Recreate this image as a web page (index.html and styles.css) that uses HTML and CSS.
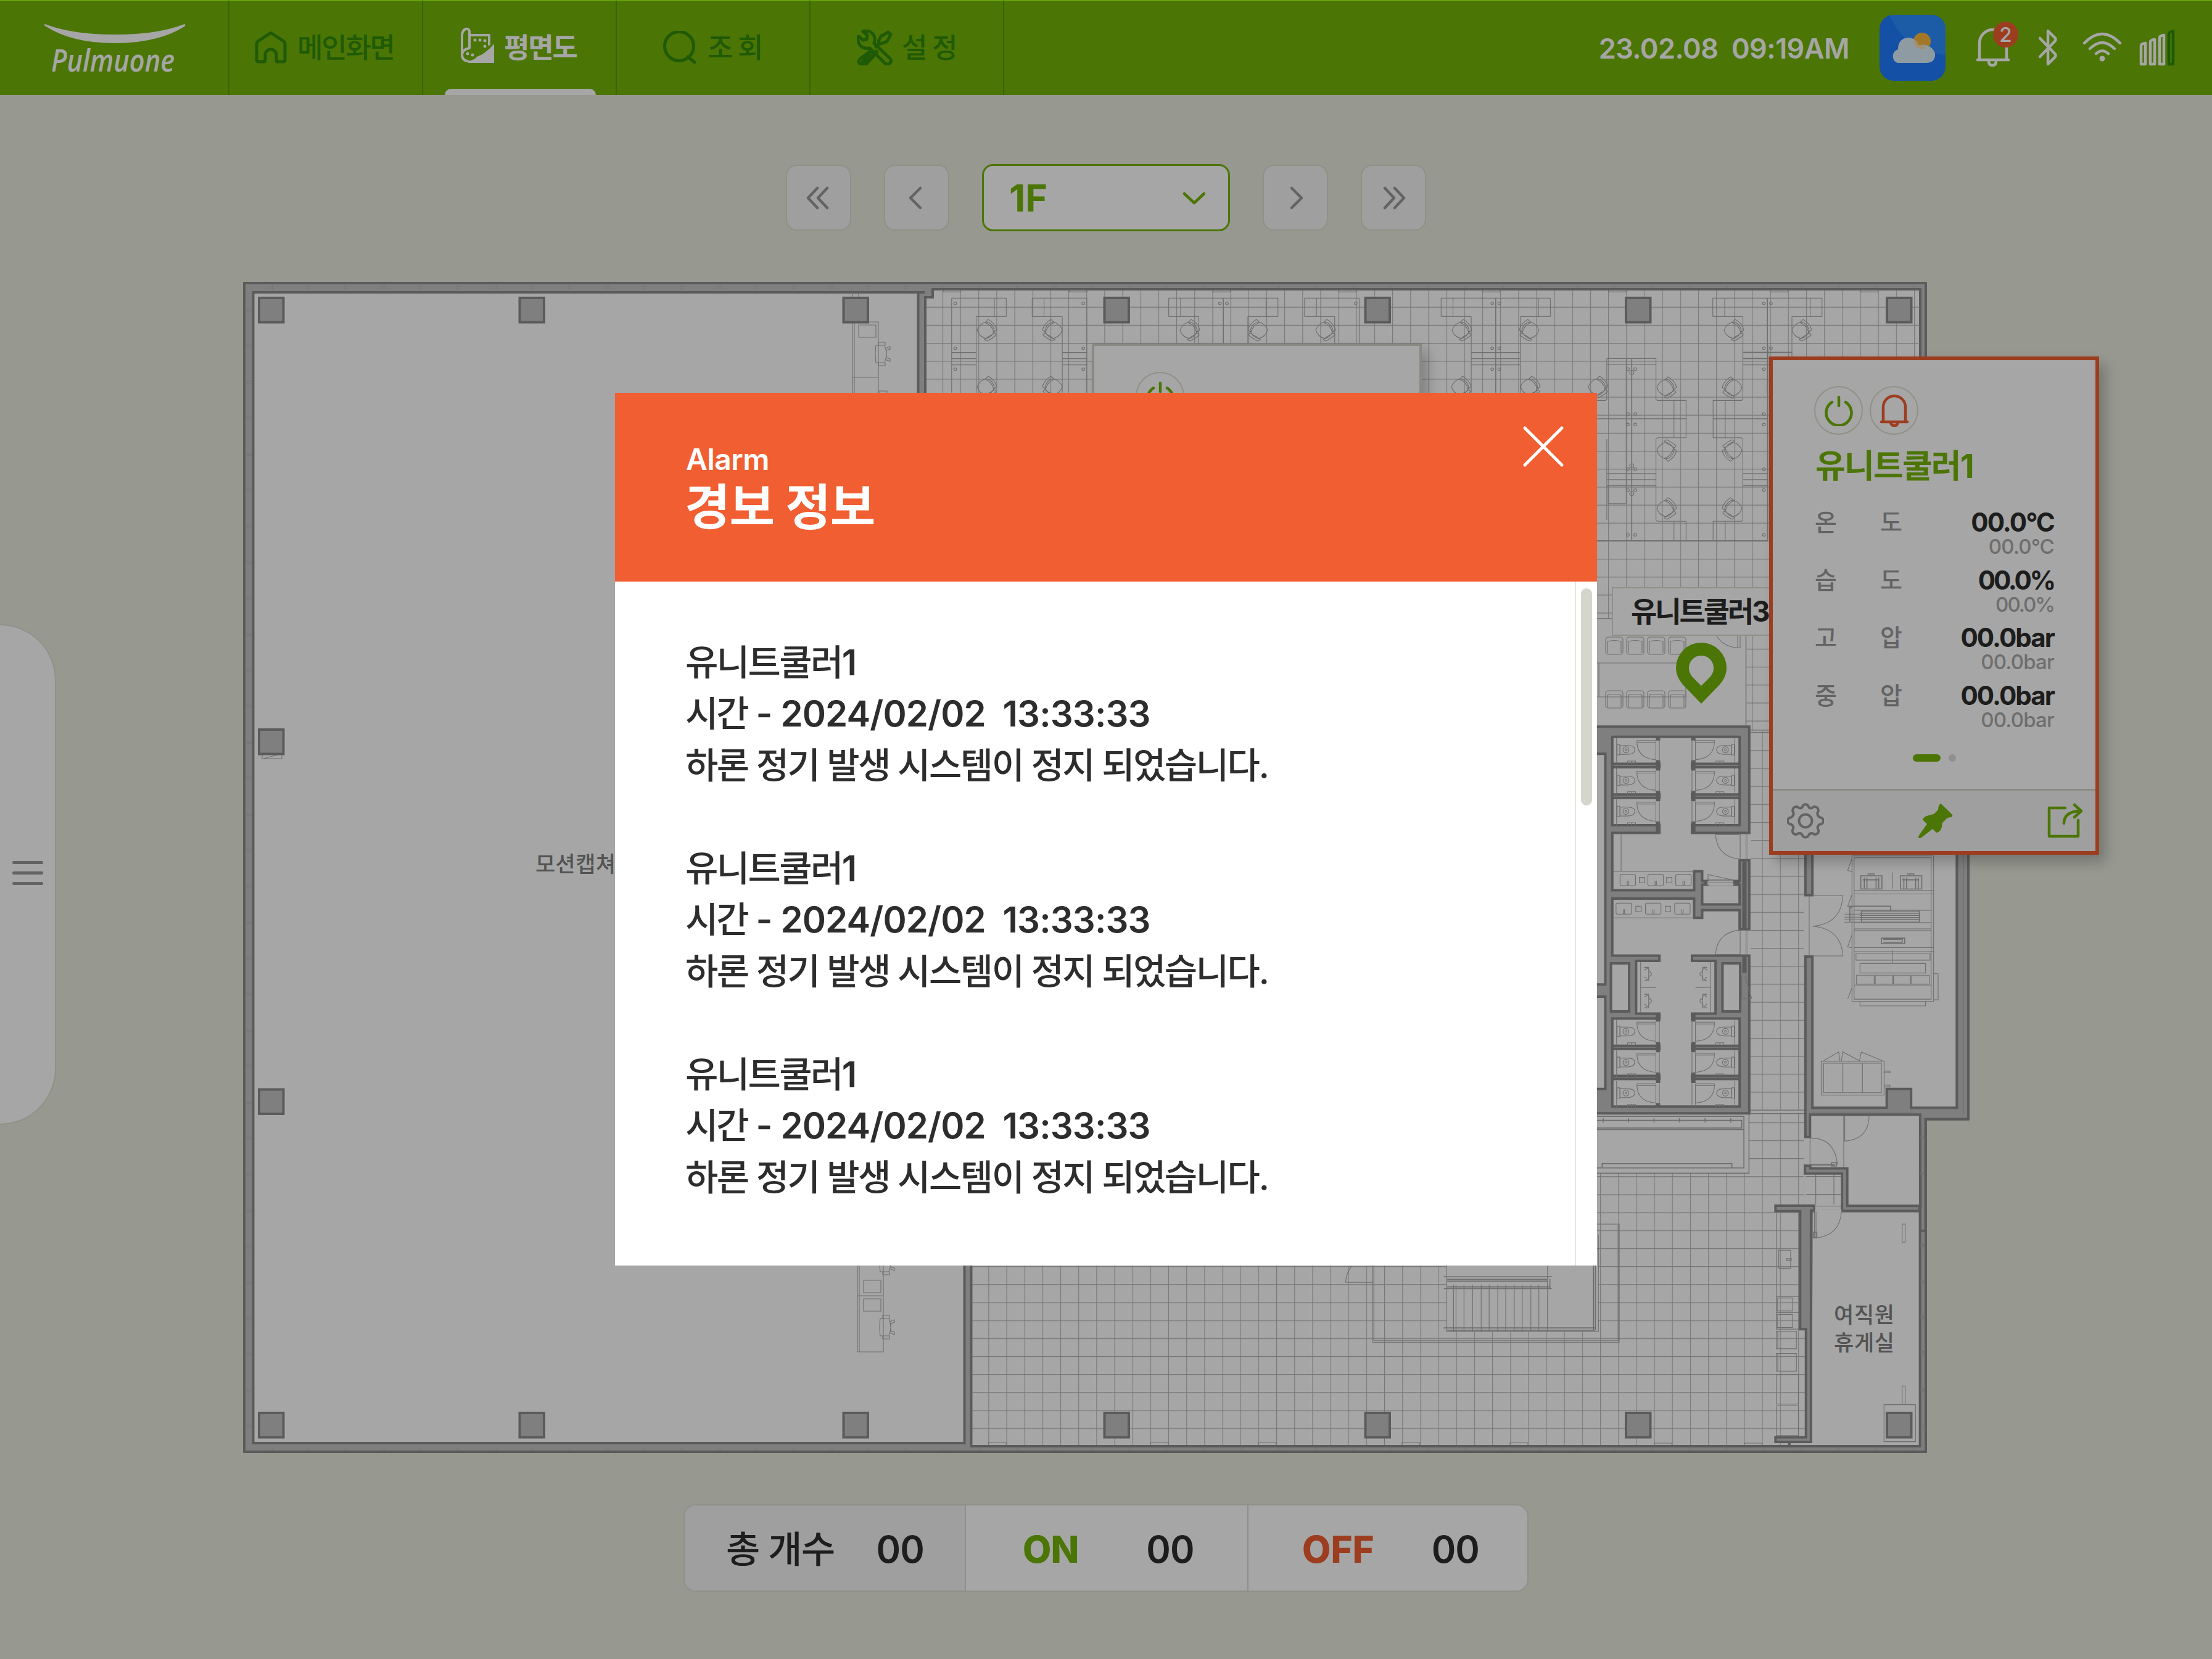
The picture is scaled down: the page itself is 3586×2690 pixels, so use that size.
FILE: index.html
```html
<!DOCTYPE html>
<html lang="ko">
<head>
<meta charset="utf-8">
<title>Pulmuone 평면도</title>
<link rel="stylesheet" href="styles.css">
</head>
<body>
<div class="screen">
  <header class="topbar">
    <div class="logo">
      <svg width="372" height="154" viewBox="0 0 372 154">
        <path class="logo-fill" d="M73 39Q116 56 186 56T299 39Q302 40 299 43Q256 70 186 70T73 42Q71 39 73 39Z"/>
        <text class="logo-text" x="83" y="116" textLength="200" lengthAdjust="spacingAndGlyphs">Pulmuone</text>
      </svg>
    </div>
    <nav class="menu">
      <a class="menu-item menu-home">
        <svg width="52" height="52" viewBox="0 0 52 52"><path d="M3 20Q3 18 5 16L24 3.500Q26 2 28 3.500L47 16Q49 18 49 20V46Q49 49 46 49H36Q35 49 35 46V38A9 9 0 0 0 17 38V46Q17 49 15 49H6Q3 49 3 46Z"/></svg>
        <span class="menu-label">메인화면</span>
      </a>
      <a class="menu-item menu-plan active">
        <svg width="56" height="60" viewBox="0 0 56 60"><path d="M15 12V8Q15 2 9 3Q3 5 3 14V44Q3 54 12 55M15 12V34Q4 36 3 44M15 13H47V28"/><path class="solid" d="M55 27V58H13V55Q24 53 27 48Q40 44 55 27Z"/><circle class="solid" cx="24" cy="21" r="2.500"/><circle class="solid" cx="32" cy="21" r="2.500"/><circle class="solid" cx="40" cy="22" r="2.500"/><circle class="solid" cx="40" cy="31" r="2.500"/><circle class="solid" cx="12" cy="43" r="2.500"/><circle class="solid" cx="20" cy="45" r="2.500"/></svg>
        <span class="menu-label">평면도</span>
      </a>
      <a class="menu-item menu-search">
        <svg width="54" height="54" viewBox="0 0 54 54"><circle cx="26" cy="25" r="23.500"/><path d="M40 42L51 51"/></svg>
        <span class="menu-label">조 회</span>
      </a>
      <a class="menu-item menu-settings">
        <svg width="58" height="58" viewBox="0 0 58 58"><path d="M10 3Q20 0 26 7Q31 13 28 22L53 46Q58 51 53 55Q49 58 45 54L21 30Q11 32 5 25Q0 18 3 11L10 17L16 16L17 9Z"/><path d="M38 23L35 19L39 11L51 4L55 8L49 19L42 22ZM37 22L31 28M24 35L8 54M33 37L15 56M24 33L5 48Q1 52 5 55Q9 58 13 54L32 35"/></svg>
        <span class="menu-label">설 정</span>
      </a>
    </nav>
    <div class="status">
      <span class="clock">23.02.08&nbsp; 09:19AM</span>
      <svg class="weather" width="107" height="107" viewBox="0 0 107 107">
        <defs><clipPath id="tile"><rect width="107" height="107" rx="23"/></clipPath></defs>
        <g clip-path="url(#tile)"><rect width="107" height="107" fill="#1f7cff"/><circle cx="110" cy="-35" r="100" fill="#2b8dff"/></g>
        <circle cx="69" cy="43" r="14" fill="#f9b93c"/>
        <path fill="#dceefb" d="M29 78A13 12 0 0 1 30 56Q30 38 47 37Q60 38 63 50Q72 46 82 52Q91 58 90 67Q88 78 76 78Z"/>
        <path fill="#fbdcae" d="M55 41A14 14 0 0 0 76 54Q69 46 63 50Q61 43 55 41Z"/>
      </svg>
      <div class="bell">
        <svg width="54" height="62" viewBox="0 0 54 62"><path d="M5 50V24A21 21 0 0 1 49 24V50M2 51H52M20 53Q20 60 26 60T32 53"/></svg>
        <span class="badge">2</span>
      </div>
      <svg class="bluetooth" width="30" height="60" viewBox="0 0 30 60"><path d="M2 15L27 41Q28 43 27 45L15 57V3L27 15Q28 17 27 19L2 45"/></svg>
      <svg class="wifi" width="64" height="50" viewBox="0 0 64 50"><path d="M3 18Q32 -12 61 18M12 27Q32 7 52 27M22 35Q32 26 42 35"/><circle cx="32" cy="43" r="4.500"/></svg>
      <svg class="signal" width="60" height="60" viewBox="0 0 60 60"><path d="M3 27Q3 24 10 23V57H3ZM18 21Q18 18 25 17V57H18ZM33 14Q33 11 40 10V57H33Z"/><path class="off" d="M48 8Q48 5 55 4V57H48Z"/></svg>
    </div>
  </header>

  <main class="content">
    <div class="pager">
      <button class="page-btn"><svg width="40" height="40" viewBox="0 0 40 40"><path d="M18 4L3 20L18 36M34 4L19 20L34 36"/></svg></button>
      <button class="page-btn"><svg width="40" height="40" viewBox="0 0 40 40"><path d="M26 4L10 20L26 36"/></svg></button>
      <div class="floor-select"><span>1F</span><svg width="38" height="24" viewBox="0 0 38 24"><path d="M4 5L20 20L36 5"/></svg></div>
      <button class="page-btn"><svg width="40" height="40" viewBox="0 0 40 40"><path d="M14 4L30 20L14 36"/></svg></button>
      <button class="page-btn"><svg width="40" height="40" viewBox="0 0 40 40"><path d="M6 4L21 20L6 36M22 4L37 20L22 36"/></svg></button>
    </div>

    <section class="plan">
      <svg class="plan-drawing" width="3586" height="1900" viewBox="0 457 3586 1900">
        <defs>
          <pattern id="gridTop" x="2607.100" y="614.300" width="29.170" height="29.170" patternUnits="userSpaceOnUse"><path class="grid" d="M.6 0V29.170M0 .6H29.170"/></pattern>
          <pattern id="gridMid" x="2856.600" y="1216.200" width="29.170" height="29.170" patternUnits="userSpaceOnUse"><path class="grid" d="M.6 0V29.170M0 .6H29.170"/></pattern>
          <pattern id="gridLow" x="2652.400" y="1907.200" width="29.170" height="29.170" patternUnits="userSpaceOnUse"><path class="grid" d="M.6 0V29.170M0 .6H29.170"/></pattern>
          <pattern id="studH" x="437" y="0" width="60.500" height="20" patternUnits="userSpaceOnUse"><path class="grid" d="M1 0V20M4.500 0V20"/></pattern>
          <pattern id="studV" x="0" y="1026" width="20" height="58.400" patternUnits="userSpaceOnUse"><path class="grid" d="M0 1H20M0 4.500H20"/></pattern>
          <g id="chair"><path d="M-15 0Q-11 -10 -1 -13Q10 -12 13 1Q9 12 0 14Q-12 11 -15 0ZM3 -17Q14 -11 17 0L12 4Q9 -8 -2 -12ZM-3 16L3 11L14 5L16 8Q10 14 1 18Z"/></g>
          <g id="seat"><rect x="0" y="0" width="28" height="28" rx="4"/><path d="M3 7Q14 4 25 7V26M3 7V26"/></g>
          <g id="deskL"><path d="M0 160H78M0 160V620M61 160V250M78 160V250M35 250H78M35 250V620M0 425H35M0 455H35M0 485H35"/><ellipse cx="5" cy="186" rx="2" ry="6"/><ellipse cx="5" cy="404" rx="2" ry="6"/><ellipse cx="5" cy="506" rx="2" ry="6"/></g>
          <g id="stall"><path d="M140 93V178M287 100V170M300 100V170M216 102H285M216 108H285M216 102Q215 160 285 164M142 115H152V149H142ZM153 118H180Q208 118 208 132T180 147H153Z"/><ellipse cx="175" cy="132" rx="11" ry="10"/><circle cx="175" cy="132" r="3"/><path d="M181 178V169H211V178M196 169V178"/></g>
          <g id="sinkbox"><rect width="58" height="36" rx="5"/><path d="M27 20V34H32V20"/></g>
          <g id="deskchair"><path d="M0 -14H14Q20 0 14 14H0Q-2 0 0 -14ZM4 -14V-19H15V-14M4 14V19H15V14M15 -9L23 -12V-8L17 -6M15 9L23 12V8L17 6M17 -7V7"/></g>
        </defs>

        <path class="wall" d="M396 459H3122V1300H3190V1814.700H3122V2354H396Z"/>
        <path class="studs-h" d="M410 462H3114V470H410ZM410 2347H3114V2352H410Z"/>
        <path class="studs-v" d="M399 470H408V2340H399ZM3114 1830H3120V2340H3114Z"/>
        <path class="room" d="M410.500 474H1499V474H1488.500V1900H1563.500V2340H410.500Z"/>
        <path class="room" d="M1500 482H1512V469H3113V1300H2927V1806H2927V1903H2986V1964H2938V2345H1574.500V1900H1500Z"/>
        <path fill="url(#gridTop)" d="M1502 483H1513V471H3112V1185H1502Z"/>
        <path fill="url(#gridMid)" d="M2837 1185H2925V1800H2837Z"/>
        <path fill="url(#gridLow)" d="M1576 1804H2925V1904H2985V1955H2926V2343H1576Z"/>

        <!-- upper office workstations -->
        <g class="thin" transform="translate(1360 430) scale(1.1352 .33333)">
          <use href="#deskL" x="161"/><use href="#deskL" x="549"/><use href="#deskL" x="938"/><use href="#deskL" x="1326"/>
          <g transform="scale(-1 1)"><use href="#deskL" x="-354"/><use href="#deskL" x="-549"/><use href="#deskL" x="-743"/><use href="#deskL" x="-938"/><use href="#deskL" x="-1326"/></g>
          <path d="M149 122V130H174V122M329 122V130H354V122M534 122V130H559V122M714 122V130H739V122M919 122V130H944V122M1099 122V130H1124V122M1330 122V130H1355V122M1459 122V130H1484V122"/>
        </g>
        <g class="thin">
          <use href="#chair" x="1599" y="535"/><use href="#chair" x="1928" y="535"/><use href="#chair" x="2148" y="535"/><use href="#chair" x="2369" y="535"/><use href="#chair" x="2810" y="535"/><use href="#chair" x="2920" y="535"/>
          <use href="#chair" x="1599" y="627"/><use href="#chair" x="2368" y="627"/><use href="#chair" x="2480" y="627"/><use href="#chair" x="2590" y="627"/>
          <g transform="scale(-1 1)"><use href="#chair" x="-1707" y="535"/><use href="#chair" x="-2040" y="535"/><use href="#chair" x="-2480" y="535"/><use href="#chair" x="-1707" y="627"/></g>
        </g>
        <g class="thin" transform="translate(2560 560) scale(.5612 .5485)">
          <path d="M80 39H222V160L226 163H309V273H226L222 277V516L226 520H309V575M80 39V160L76 163H52M80 57H222M136 39V468H84M80 277V516M274 163V273M274 520V575M84 415V468M80 379H222M80 397H222M80 415H222M52 577H545M473 0V160L469 163H387V273H469L473 277V516L469 520H387V575M422 163V273M422 520V575M473 20H615M473 38H545M473 379H545M473 397H545M473 415H545"/>
          <path class="mid" d="M152 40V575M52 217H309M387 217H545M545 0V575"/>
          <g><circle cx="141" cy="70" r="4"/><circle cx="162" cy="70" r="4"/><circle cx="152" cy="80" r="6"/><circle cx="141" cy="203" r="4"/><circle cx="162" cy="203" r="4"/><circle cx="141" cy="234" r="4"/><circle cx="162" cy="234" r="4"/><circle cx="152" cy="356" r="6"/><circle cx="141" cy="366" r="4"/><circle cx="162" cy="366" r="4"/><circle cx="141" cy="428" r="4"/><circle cx="162" cy="428" r="4"/><circle cx="152" cy="438" r="6"/><circle cx="141" cy="560" r="4"/><circle cx="162" cy="560" r="4"/><circle cx="534" cy="203" r="4"/><circle cx="534" cy="234" r="4"/><circle cx="534" cy="366" r="4"/><circle cx="534" cy="428" r="4"/><circle cx="534" cy="560" r="4"/></g>
        </g>
        <g class="thin">
          <use href="#chair" x="2701" y="628"/>
          <g transform="scale(1 -1)"><use href="#chair" x="2701" y="-731"/></g>
          <use href="#chair" x="2701" y="824"/>
          <g transform="scale(-1 1)"><use href="#chair" x="-2809" y="628"/><use href="#chair" x="-2809" y="824"/></g>
          <g transform="scale(-1 -1)"><use href="#chair" x="-2809" y="-731"/></g>
        </g>

        <!-- meeting room -->
        <path class="room-plain" d="M2500 1003H2830.500V1178H2500Z"/>
        <g class="thin">
          <path d="M2560 1075H2733V1130H2560M2592 1075V1130M2782 1030Q2795 1050 2817 1050M2817 1030V1050H2821V1030"/>
          <use href="#seat" x="2603" y="1033"/><use href="#seat" x="2637" y="1033"/><use href="#seat" x="2671" y="1033"/><use href="#seat" x="2705" y="1033"/>
          <use href="#seat" x="2603" y="1120"/><use href="#seat" x="2637" y="1120"/><use href="#seat" x="2671" y="1120"/><use href="#seat" x="2705" y="1120"/>
        </g>

        <!-- restroom core and annex -->
        <g transform="translate(2560 1150) scale(.43367 .49745)">
          <path class="wall" d="M-20 57H636V1317H-20Z"/>
          <path class="room" d="M-20 145H98V897H-20ZM-20 937H98V1238H-20Z"/>
          <path class="room" d="M124 90H600V378H422V403H634V492H600V560H460V528H430V590H124V403H300V378H124Z"/>
          <path class="room" d="M460 572H600V636H460Z"/>
          <path class="room" d="M124 617H430V680H460V655H600V717H634V803H422V820H510V992H422V1008H600V1295H124V1008H300V992H213V820H300V803H124Z"/>
          <path class="room" d="M119 828H187V985H119ZM536 828H602V985H536Z"/>
          <path class="open" d="M636 407V488M636 721V799M484 560V572M575 560V572"/>
          <path class="open" d="M484 562H575M484 570H575"/>
          <path class="wall" d="M124 178H300V189H124ZM124 278H300V289H124ZM422 178H600V189H422ZM422 278H600V289H422ZM124 1097H300V1107H124ZM124 1195H300V1205H124ZM422 1097H600V1107H422ZM422 1195H600V1205H422Z"/>
          <path class="post" d="M295 90V102M295 166V200M295 266V300M295 366V403M427 90V102M427 166V200M427 266V300M427 366V403M295 995V1018M295 1085V1118M295 1184V1218M295 1284V1295M427 995V1018M427 1085V1118M427 1184V1218M465 564H480M576 564H600M618 495V714M618 806V860"/>
          <g class="thin">
            <use href="#stall"/><use href="#stall" y="100"/><use href="#stall" y="201"/><use href="#stall" y="918"/><use href="#stall" y="1019"/><use href="#stall" y="1119"/>
            <g transform="translate(722 0) scale(-1 1)"><use href="#stall"/><use href="#stall" y="100"/><use href="#stall" y="201"/><use href="#stall" y="918"/><use href="#stall" y="1019"/><use href="#stall" y="1119"/></g>
            <path d="M157 407V527M128 528H430M128 680H430M510 407Q515 480 600 489M510 409H600M510 800Q515 728 600 720M510 799H600M602 405V490M624 405V490M602 720V802M624 720V802M482 562V539L577 557M482 557H577M482 566H577M620 870L645 942H608V870"/>
            <use href="#sinkbox" x="153" y="539"/><use href="#sinkbox" x="257" y="539"/><use href="#sinkbox" x="361" y="539"/><use href="#sinkbox" x="138" y="632"/><use href="#sinkbox" x="248" y="632"/><use href="#sinkbox" x="357" y="632"/>
            <path d="M225 548H245V566H225ZM327 548H347V566H327ZM212 642H232V660H212ZM322 642H342V660H322ZM230 824V988M492 824V988M230 907H287M435 907H492M243 841H260V884H243M243 929H260V973H243M479 841H462V884H479M479 929H462V973H479M243 850Q250 850 252 843Q262 848 262 856Q272 858 270 862Q272 868 262 870Q262 878 252 882Q250 873 243 873M243 938Q250 938 252 931Q262 936 262 944Q272 946 270 950Q272 956 262 958Q262 966 252 970Q250 961 243 961M479 850Q472 850 470 843Q460 848 460 856Q450 858 452 862Q450 868 460 870Q460 878 470 882Q472 873 479 873M479 938Q472 938 470 931Q460 936 460 944Q450 946 452 950Q450 956 460 958Q460 966 470 970Q472 961 479 961"/>
          </g>
          <path class="room-plain" d="M-20 1320H635V1512H-20Z"/>
          <path class="thin mid" d="M-20 1327H616V1495H-20M-20 1370H616M-20 1340H608V1365H-20M86 1495V1481H571V1495M90 1333V1347M185 1333V1347M280 1333V1347M375 1333V1347M471 1333V1347M567 1333V1347"/>
          <path class="thin" d="M638 68H712M638 75H712M640 1307H845M640 1318H845"/>

          <path class="wall" d="M846 300H1455V1336H1295V1700H846Z"/>
          <path class="room" d="M872 300H1412V1299H1241V1238H1150V1299H872V806H846V606H872Z"/>
          <path class="room" d="M863 1321H1275V1700H846V1394H863Z"/>
          <path class="open" d="M846 610V802M846 1398V1484"/>
          <g class="thin">
            <path d="M1417 300V1303H1244V1316H872M1437 300V1318M860 606V806M872 608H986Q980 700 872 707Q980 715 986 804H872"/>
            <path d="M1020 478H1325V952H1020ZM1028 484H1316V945H1028ZM1028 590H1325M1028 602H1325M1028 655H1316M1028 695H1316M1028 716H1316M1028 722H1316M1028 777H1325M1028 790H1325M1035 795H1312V818H1035ZM1050 829H1295V860H1050ZM1037 867H1103V896H1037ZM1107 867H1171V896H1107ZM1175 867H1239V896H1175ZM1243 867H1309V896H1243ZM1028 899H1316M1050 952H1295V967H1050ZM1325 862H1342V947H1325M1172 532V586M1172 785V826M1020 486L1004 525L1020 530M1020 604L1004 642L1020 648M1020 735L1004 774L1020 778M1020 908L1004 944"/>
            <path class="mid" d="M1053 543H1132V586H1053ZM1060 556H1122M1066 549V586M1076 549V586M1110 549V586M1120 549V586M1078 537H1106M1201 543H1281V586H1201ZM1208 556H1271M1214 549V586M1224 549V586M1258 549V586M1268 549V586M1226 537H1254M1055 658H1272V694H1055ZM1050 665H1275M1050 672H1275M1050 679H1275M1050 686H1275M1012 693V642H1164V658M1130 746H1217V764H1130ZM1137 750H1208V760H1137"/>
            <path d="M992 668H1050M992 678H1050M992 686H1050M992 694H1050M905 1147H1140V1258H905ZM914 1154H1130V1250H914ZM986 1154V1250M1059 1154V1250M914 1146L970 1117L975 1146M980 1146L986 1117L1048 1146M1048 1146L1055 1117L1134 1146M1140 1180H1162V1185H1140M1140 1225H1162V1231H1140"/>
          </g>
        </g>

        <!-- rooms at the south-east corner -->
        <g transform="translate(2560 1800) scale(.40816 .38268)">
          <path class="wall" d="M897 236H918V247H1065V406H1352V428H1044V269H897Z"/>
          <path class="cover" d="M893 274H1040V400H893Z"/>
          <path class="room" d="M923 428H1354V1424H835V1406H921V930H921Z"/>
          <path class="wall" d="M780 405H933V425H921V1406H780V1386H901V928H878V428H780Z"/>
          <path class="open" d="M937 428H1042M899 122V230"/>
          <g class="thin">
            <path d="M937 407H1042M917 120V232M918 118Q1015 118 1026 229H918M918 233H1015M1051 24V243M1055 24V131Q1150 125 1152 24H1044M935 430V542Q1035 535 1042 430M941 430V540M1366 20V270M1361 270V420M1283 483H1295V560H1283ZM1283 1169H1295V1247H1283ZM1211 1248H1336V1405H1211Z"/>
            <path d="M783 432V930M793 594H840V670H793ZM824 629H843V636H824ZM783 790H873M783 858H873M783 928H873M787 796H848V851H787ZM787 866H848V921H787ZM783 937H863V1011H783ZM789 937V1011M783 1031H863V1106H783ZM789 1031V1106M783 1120H871V1246H783ZM783 1253H871V1379H783ZM299 1420V1411H368V1420M656 1420V1411H726V1420M940 274V400M1012 274V400M899 281H1042M899 357H1042"/>
            <path d="M1354 112H1372M1354 120H1372M1354 264H1372M1354 272H1372M1354 568H1372M1354 576H1372M1354 720H1372M1354 728H1372M1354 872H1372M1354 880H1372M1354 1024H1372M1354 1032H1372M1354 1178H1372M1354 1186H1372"/>
            <path class="mid" d="M1003 222H1022V237H1003ZM931 517H944V540H931Z"/>
          </g>
        </g>

        <!-- staircase -->
        <g transform="translate(1080 2020) scale(.9949 .36990)">
          <path class="cover" d="M1272 60H1519V376H1272Z"/>
          <path class="thin" d="M1151 60V423H1553V-95H1480M1153 60V416H1551V-90M1272 60V376H1519V-50M1436 60V360M1107 160Q1108 120 1117 88M1107 160H1151M1283 170V376M1287 170V376M1300 170V376M1314 170V376M1328 170V376M1341 170V376M1355 170V376M1368 170V376M1382 170V376M1395 170V376M1409 170V376M1422 170V376M1436 170V376"/>
          <path class="thin mid" d="M1267 135H1443M1272 147H1436M1272 155H1436M1272 180H1440M1267 188H1443M1267 360H1514M1272 370H1514M1511 60V370M1514 60V370M1440 145V185"/>
          <path class="thin" d="M525 873V863H554V873M789 873V863H818V873M965 873V863H994V873M1199 873V863H1228V873M1375 873V863H1404V873"/>
        </g>

        <!-- desks in the west hall -->
        <g class="thin">
          <path d="M1382 474V640M1385 524V640M1392 474V482M1382 522H1424V640M1392 527H1420V547H1392ZM1382 612H1424M1390 2050V2192H1432V2050M1393 2050V2192M1400 2076H1428V2096H1400ZM1390 2101H1432M1400 2106H1428V2126H1400Z"/>
          <use href="#deskchair" x="1420" y="574"/><use href="#deskchair" x="1427" y="2152"/><use href="#deskchair" x="1427" y="2048"/><path d="M1425 638V634H1438V638M425 1224V1230H457V1224M427 1230L450 1224"/>
        </g>

        <g class="column">
          <rect x="420" y="483" width="39.500" height="39.500"/><rect x="842.500" y="483" width="39.500" height="39.500"/><rect x="1367.500" y="483" width="39.500" height="39.500"/><rect x="1790.500" y="483" width="39.500" height="39.500"/><rect x="2213.500" y="483" width="39.500" height="39.500"/><rect x="2636" y="483" width="39.500" height="39.500"/><rect x="3059" y="483" width="39.500" height="39.500"/>
          <rect x="420" y="1183" width="39.500" height="39.500"/><rect x="420" y="1766.500" width="39.500" height="39.500"/>
          <rect x="420" y="2291" width="39.500" height="39.500"/><rect x="842.500" y="2291" width="39.500" height="39.500"/><rect x="1367.500" y="2291" width="39.500" height="39.500"/><rect x="1790.500" y="2291" width="39.500" height="39.500"/><rect x="2213.500" y="2291" width="39.500" height="39.500"/><rect x="2636" y="2291" width="39.500" height="39.500"/><rect x="3059" y="2291" width="39.500" height="39.500"/>
        </g>
        <text class="room-name" x="868" y="1414" textLength="130">모션캡쳐</text>
        <text class="room-name" x="2973" y="2145" textLength="98">여직원</text>
        <text class="room-name" x="2973" y="2190" textLength="98">휴게실</text>
      </svg>

      <div class="marker">
        <span class="marker-label">유니트쿨러3</span>
        <svg width="84" height="100" viewBox="0 0 84 100"><path fill-rule="evenodd" d="M42 0A41 41 0 0 1 83 41Q83 55 72 68L42 99L12 68Q1 55 1 41A41 41 0 0 1 42 0ZM42 21A20 20 0 0 0 22 42Q22 49 28 56L42 70L56 56Q62 49 62 42A20 20 0 0 0 42 21Z"/></svg>
      </div>

      <article class="unit unit-back">
        <div class="unit-body"><div class="unit-icons">
          <span class="round"><svg width="50" height="50" viewBox="0 0 50 50"><path class="on" d="M25 3V17M14 11A20.500 20.500 0 1 0 36 11"/></svg></span>
        </div></div>
      </article>

      <article class="unit unit-alarm">
        <div class="unit-body">
          <div class="unit-icons">
            <span class="round"><svg width="50" height="50" viewBox="0 0 50 50"><path class="on" d="M25 3V17M14 11A20.500 20.500 0 1 0 36 11"/></svg></span>
            <span class="round"><svg width="50" height="56" viewBox="0 0 50 56"><path class="alarm" d="M7 45V22A18 18 0 0 1 43 22V45M4 46H46M19 47Q20 52 25 52T31 47"/></svg></span>
          </div>
          <h2 class="unit-name">유니트쿨러1</h2>
          <dl class="readings">
            <div class="reading"><dt><span>온</span><span>도</span></dt><dd>00.0°C<small>00.0°C</small></dd></div>
            <div class="reading percent"><dt><span>습</span><span>도</span></dt><dd>00.0%<small>00.0%</small></dd></div>
            <div class="reading"><dt><span>고</span><span>압</span></dt><dd>00.0bar<small>00.0bar</small></dd></div>
            <div class="reading"><dt><span>중</span><span>압</span></dt><dd>00.0bar<small>00.0bar</small></dd></div>
          </dl>
          <div class="dots"><i class="dot current"></i><i class="dot"></i></div>
        </div>
        <footer class="unit-tools">
          <svg class="gear" width="60" height="60" viewBox="0 0 60 60"><path d="M25.400 6.200A5 5 0 0 1 34.600 6.200Q36 10.500 40.500 9.200A5.500 5.500 0 0 1 49.500 16.500Q48.500 21.500 53.500 24.500A5.500 5.500 0 0 1 53.500 35.500Q48.500 38.500 50 43A5.500 5.500 0 0 1 42 50.500Q37 49 35 53.500A5.500 5.500 0 0 1 25 53.500Q23 49 18 50.500A5.500 5.500 0 0 1 10 43Q11.500 38.500 6.500 35.500A5.500 5.500 0 0 1 6.500 24.500Q11.500 21.500 10.500 16.500A5.500 5.500 0 0 1 19.500 9.200Q24 10.500 25.400 6.200Z"/><circle cx="30" cy="30" r="10.500"/></svg>
          <svg class="tack" width="58" height="58" viewBox="0 0 58 58"><path d="M36 1.500Q37 1 38 1.500L55 18Q58 21 54 23Q50 23 47 25L40 32Q40 38 37 44Q34 48 30 48L24 42L6 56Q2 58 1 56Q1 54 3 51L15 34L8 27Q9 22 18 20L26 18L33 11Q33 5 36 1.500Z"/></svg>
          <svg class="share" width="60" height="60" viewBox="0 0 60 60"><path d="M30 9H4V55H51V29M28 34Q28 14 56 14M45 4L56 14L45 24"/></svg>
        </footer>
      </article>
    </section>

    <div class="summary">
      <div class="sum total"><span class="sum-label">총 개수</span><b>00</b></div>
      <div class="sum on-count"><span class="sum-label">ON</span><b>00</b></div>
      <div class="sum off-count"><span class="sum-label">OFF</span><b>00</b></div>
    </div>
  </main>

  <div class="drawer-tab"><i></i><i></i><i></i></div>
  <div class="dim"></div>

  <section class="modal">
    <header class="modal-head">
      <div><p class="modal-kicker">Alarm</p><h1 class="modal-title">경보 정보</h1></div>
      <svg class="close" width="68" height="68" viewBox="0 0 68 68"><path d="M4 4L64 64M64 4L4 64"/></svg>
    </header>
    <div class="modal-body">
      <ul class="alerts">
        <li><p class="a-name">유니트쿨러<span>1</span></p><p class="a-time"><span>시간</span> - 2024/02/02&nbsp; 13:33:33</p><p class="a-msg">하론 정기 발생 시스템이 정지 되었습니다.</p></li>
        <li><p class="a-name">유니트쿨러<span>1</span></p><p class="a-time"><span>시간</span> - 2024/02/02&nbsp; 13:33:33</p><p class="a-msg">하론 정기 발생 시스템이 정지 되었습니다.</p></li>
        <li><p class="a-name">유니트쿨러<span>1</span></p><p class="a-time"><span>시간</span> - 2024/02/02&nbsp; 13:33:33</p><p class="a-msg">하론 정기 발생 시스템이 정지 되었습니다.</p></li>
      </ul>
      <div class="scroll"><div class="thumb"></div></div>
    </div>
  </section>
</div>
</body>
</html>
```
FILE: styles.css
```css
:root {
  --green: #73b408;
  --deep: #308a08;
  --red: #f15e32;
  --ink: #2d2d2d;
  --line: #dddecf;
}
* { box-sizing: border-box; margin: 0; padding: 0; }
body { background: #e8eadd; font-family: Inter, "Noto Sans CJK KR", sans-serif; color: var(--ink); }
svg { display: block; fill: none; stroke-linecap: round; stroke-linejoin: round; flex: none; }
.screen { position: relative; width: 3586px; height: 2690px; overflow: hidden; display: flex; flex-direction: column; }

/* top bar */
.topbar { height: 154px; background: var(--green); display: flex; }
.logo { width: 372px; border-right: 2px solid #539f07; }
.logo-fill { fill: #fff; }
.logo-text { fill: #fff; font: italic 600 51px "Open Sans", sans-serif; }
.menu { display: flex; }
.menu-item { width: 314px; height: 154px; border-right: 2px solid #539f07; display: flex; align-items: center; color: var(--deep); position: relative; }
.menu-item svg { stroke: var(--deep); stroke-width: 5; }
.menu-label { font-size: 45px; line-height: 60px; font-weight: 500; letter-spacing: -2.2px; white-space: nowrap; margin-top: 2px; }
.menu-home { padding-left: 41px; gap: 17px; }
.menu-plan { padding-left: 60px; gap: 15px; color: #fff; }
.menu-plan .menu-label { font-weight: 700; letter-spacing: -2.2px; }
.menu-plan svg { stroke: #fff; stroke-width: 4; margin-top: -6px; }
.menu-plan .solid { fill: #fff; stroke: none; }
.menu-plan::after { content: ""; position: absolute; left: 35px; bottom: 0; width: 245px; height: 10px; background: #fff; border-radius: 10px 10px 0 0; }
.menu-search { padding-left: 75px; gap: 18px; }
.menu-settings { padding-left: 75px; gap: 15px; }
.status { flex: 1; display: flex; align-items: center; justify-content: flex-end; padding-right: 58px; }
.status svg { stroke: #fff; stroke-width: 4.5; }
.clock { color: #fff; font-size: 45px; font-weight: 600; line-height: 60px; margin: 3px 49px 0 0; letter-spacing: -.55px; }
.status .weather { stroke: none; margin-right: 50px; }
.bell { position: relative; margin-right: 47px; }
.badge { position: absolute; left: 27px; top: -11px; width: 41px; height: 42px; border-radius: 50%; background: var(--red); color: #fff; font-size: 33px; line-height: 43px; font-weight: 500; text-align: center; }
.bluetooth { margin-right: 41px; }
.wifi { margin-right: 28px; }
.wifi circle { fill: #fff; stroke: none; }
.signal .off { stroke: var(--deep); }

/* floor selector */
.content { flex: 1; display: flex; flex-direction: column; align-items: center; }
.pager { display: flex; align-items: center; gap: 53px; margin-top: 112px; height: 109px; }
.page-btn { width: 106px; height: 107px; border: 2px solid var(--line); border-radius: 18px; background: #f5f5f5; display: flex; align-items: center; justify-content: center; }
.page-btn svg { stroke: #999; stroke-width: 4.5; }
.floor-select { width: 402px; height: 109px; border: 3px solid var(--green); border-radius: 18px; background: #fff; display: flex; align-items: center; justify-content: space-between; padding: 0 37px 0 41px; color: var(--green); font-size: 61px; line-height: 100px; font-weight: 700; letter-spacing: 0; }
.floor-select svg { stroke: var(--green); stroke-width: 4.5; }

/* floor plan */
.plan { position: relative; width: 3586px; height: 1900px; margin-top: 82px; }
.plan-drawing { stroke-linecap: butt; stroke-linejoin: miter; }
.plan-drawing * { vector-effect: non-scaling-stroke; }
.grid { stroke: #b4b4b4; stroke-width: 1; }
.wall { fill: #c3c3c3; stroke: #8d8d8d; stroke-width: 4; }
.room { fill: #fff; stroke: #8d8d8d; stroke-width: 4; }
.room-plain { fill: #fff; stroke: #aaa; stroke-width: 1.5; }
.cover { fill: #fff; }
.open { stroke: #fff; stroke-width: 5; }
.post { stroke: #8d8d8d; stroke-width: 7; }
.thin { stroke: #aaa; stroke-width: 1.1; }
.mid { stroke: #a8a8a8; stroke-width: 1.6; }
.studs-h { fill: url(#studH); }
.studs-v { fill: url(#studV); }
.column { fill: #c3c3c3; stroke: #8d8d8d; stroke-width: 4; }
.room-name { fill: #808080; font-size: 35px; font-weight: 500; }

.marker { position: absolute; left: 2613px; top: 495px; width: 290px; }
.marker-label { display: block; height: 79px; border: 2px solid var(--line); background: #fff; padding-left: 29px; font-size: 46px; line-height: 74px; font-weight: 700; letter-spacing: -3.1px; white-space: nowrap; }
.marker svg { margin: 11px 0 0 103px; fill: var(--green); }

.unit { position: absolute; width: 535px; height: 808px; background: #fff; border: 6px solid var(--line); box-shadow: 10px 12px 20px rgba(0, 0, 0, .22); display: flex; flex-direction: column; }
.unit-back { left: 1770px; top: 100px; border-width: 4px; border-color: #d3d4c8; }
.unit-alarm { left: 2868px; top: 121px; border-color: var(--red); }
.unit-body { flex: 1; padding: 42px 67px 0; display: flex; flex-direction: column; }
.unit-icons { display: flex; gap: 11px; }
.round { width: 79px; height: 79px; border: 2px solid var(--line); border-radius: 50%; display: flex; align-items: center; justify-content: center; }
.on { stroke: var(--green); stroke-width: 4.5; }
.alarm { stroke: var(--red); stroke-width: 4.5; }
.unit-name { margin: 16px 0 0 2px; font-size: 53px; line-height: 70px; font-weight: 700; letter-spacing: -1.8px; color: var(--green); white-space: nowrap; }
.readings { margin-top: 31px; }
.reading { height: 93.6px; display: flex; justify-content: space-between; }
.reading dt { display: flex; width: 143px; padding-left: 1px; justify-content: space-between; font-size: 39px; line-height: 50px; font-weight: 500; color: #999; }
.reading dd { font-size: 42px; line-height: 50px; font-weight: 700; text-align: right; letter-spacing: -1.9px; }
.reading small { display: block; font-size: 33px; line-height: 28px; font-weight: 500; color: #aaa; letter-spacing: -.8px; }
.percent dd { letter-spacing: -3.2px; }
.percent small { letter-spacing: -2px; }
.dots { display: flex; align-items: center; justify-content: center; gap: 13px; margin: 27px 0 0 0; }
.dot { width: 12px; height: 12px; border-radius: 6px; background: #ddd; }
.dot.current { width: 45px; background: var(--green); }
.unit-tools { height: 101px; border-top: 3px solid #d3d4c8; background: #f5f5f5; display: flex; align-items: center; justify-content: space-between; padding: 0 19px 0 23px; }
.gear { stroke: #999; stroke-width: 4; }
.tack { fill: var(--green); }
.share { stroke: var(--green); stroke-width: 4.5; }

/* counters */
.summary { display: flex; width: 1370px; height: 142px; margin-top: 82px; border: 2px solid var(--line); border-radius: 20px; background: #fff; overflow: hidden; }
.sum { display: flex; align-items: center; font-size: 60px; line-height: 80px; border-left: 2px solid var(--line); padding-top: 3px; }
.sum b { font-weight: 600; letter-spacing: -1px; }
.sum-label { font-weight: 800; letter-spacing: -1px; }
.total { width: 454px; background: #f5f5f5; border-left: 0; padding-left: 67px; gap: 68px; }
.total .sum-label { font-weight: 500; letter-spacing: -1.5px; }
.on-count { width: 458px; padding-left: 92px; gap: 110px; }
.on-count .sum-label { color: var(--green); }
.off-count { flex: 1; padding-left: 87px; gap: 93px; }
.off-count .sum-label { color: var(--red); letter-spacing: 0; }

.drawer-tab { position: absolute; left: -2px; top: 1012px; width: 93px; height: 812px; border: 2px solid var(--line); border-radius: 0 91px 91px 0; background: #fff; display: flex; flex-direction: column; align-items: center; justify-content: center; gap: 12px; padding-bottom: 6px; }
.drawer-tab i { width: 50px; height: 5px; border-radius: 3px; background: #999; }
.dim { position: absolute; inset: 1px 0 0; background: rgba(0, 0, 0, .35); }

/* alarm dialog */
.modal { position: absolute; left: 997px; top: 637px; width: 1592px; height: 1415px; background: #fff; display: flex; flex-direction: column; }
.modal-head { height: 306px; background: var(--red); color: #fff; display: flex; justify-content: space-between; padding: 53px 53px 0 115px; }
.modal-kicker { font-size: 48px; line-height: 60px; font-weight: 600; margin-top: 25px; letter-spacing: -.6px; }
.modal-title { font-size: 80px; line-height: 90px; font-weight: 700; letter-spacing: -1px; margin: 2px 0 0 -2px; }
.close { stroke: #fff; stroke-width: 5; }
.modal-body { flex: 1; display: flex; justify-content: space-between; }
.alerts { list-style: none; padding: 90px 0 0 114px; font-size: 58px; line-height: 83.45px; font-weight: 500; white-space: nowrap; }
.alerts li { margin-bottom: 83.45px; }
.a-name { letter-spacing: -2.6px; }
.a-name span { font-weight: 600; }
.a-time { font-weight: 600; letter-spacing: -.85px; }
.a-time span { font-weight: 500; letter-spacing: -3px; }
.a-msg { letter-spacing: -2.5px; }
.scroll { width: 36px; border-left: 2px solid #e5e6da; padding: 11px 8px; }
.thumb { width: 18px; height: 352px; border-radius: 9px; background: #d5d6cb; }
```
